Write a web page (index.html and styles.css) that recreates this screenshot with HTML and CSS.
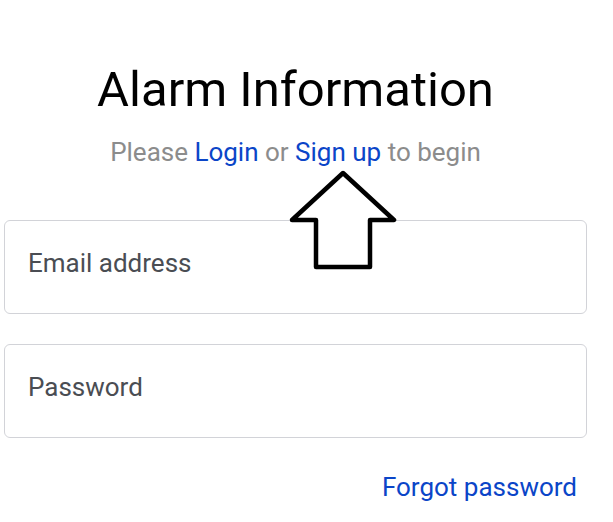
FILE: index.html
```html
<!DOCTYPE html>
<html lang="en">
<head>
    <meta charset="UTF-8">
    <meta name="viewport" content="width=device-width, initial-scale=1.0">
    <title>Alarm Information</title>
    <link rel="stylesheet" href="styles.css">
</head>
<body>

    <!-- login card -->
    <div class="container">
        <h1 class="title">Alarm Information</h1>
        <p class="subtitle">Please <a href="#">Login</a> or <a href="#">Sign up</a> to begin</p>

        <form class="login-form">
            <input type="email" placeholder="Email address">
            <input type="password" placeholder="Password">
        </form>
        <div class="forgot-row">
            <a href="#" class="forgot-link">Forgot password</a>
        </div>

        <!-- annotation arrow pointing at "Sign up" -->
        <svg class="arrow" width="114" height="102" viewBox="0 0 114 102">
            <path d="M57 4 L108 51 L84 51 L84 98 L30 98 L30 51 L6 51 Z" fill="white" stroke="black" stroke-width="4.5" stroke-linejoin="round"/>
        </svg>
    </div>

</body>
</html>
```

FILE: styles.css
```css
body {
    font-family: 'Roboto', 'Liberation Sans', sans-serif;
    margin: 0;
    padding: 0;
    background-color: white;
}
.container {
    position: relative;
    width: 583px;
    margin-left: 4px;
    padding-top: 58px;
    text-align: center;
}
.title {
    margin: 0;
    font-size: 49px;
    font-weight: 400;
    line-height: 64px;
    color: #000;
}
.subtitle {
    margin: 12px 0 0;
    font-size: 26px;
    line-height: 36px;
    color: #8c8c8c;
}
.subtitle a {
    color: #0b45c8;
    text-decoration: none;
}
.login-form {
    margin-top: 50px;
    display: flex;
    flex-direction: column;
    gap: 30px;
}
input {
    box-sizing: border-box;
    width: 100%;
    height: 94px;
    padding: 0 23px 8px;
    font-family: inherit;
    font-size: 26px;
    border: 1px solid #d2d3d8;
    border-radius: 6px;
    outline: none;
}
input::placeholder {
    color: #4a4d53;
}
.forgot-row {
    margin-top: 31px;
    text-align: right;
    padding-right: 10px;
}
.forgot-link {
    font-size: 26px;
    line-height: 36px;
    color: #0b45c8;
    text-decoration: none;
}
.arrow {
    position: absolute;
    left: 282px;
    top: 169px;
}
```
